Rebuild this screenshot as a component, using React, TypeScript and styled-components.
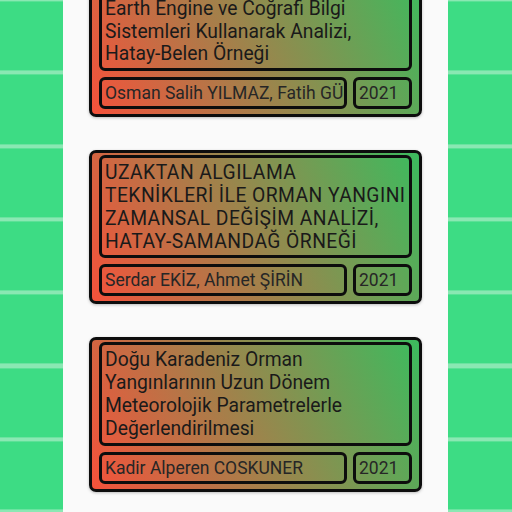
import React from "react";
import styled, { createGlobalStyle } from "styled-components";

const Global = createGlobalStyle`
  html, body { margin: 0; padding: 0; background: #fafafa; }
  body { font-family: Roboto, "Noto Sans", sans-serif; }
  #root { height: 512px; overflow: hidden; }
`;

const Screen = styled.div`
  display: flex;
  width: 512px;
  height: 512px;
  overflow: hidden;
`;

const Strip = styled.div<{ $w: number }>`
  width: ${(p) => p.$w}px;
  flex: 0 0 ${(p) => p.$w}px;
  height: 100%;
  background-color: #3ddc84;
  background-image: repeating-linear-gradient(
    to bottom,
    #8ae8b3 0px,
    #8ae8b3 4px,
    #3ddc84 4px,
    #3ddc84 73.3px
  );
  background-position: 0 -2.6px;
`;

const Middle = styled.div`
  flex: 1;
  height: 100%;
  background: #fafafa;
  overflow: hidden;
`;

const List = styled.div`
  display: flex;
  flex-direction: column;
  gap: 33px;
  padding: 0 26px;
  margin-top: -37px;
`;

const Card = styled.div`
  border: 3px solid #0d0d0d;
  border-radius: 7px;
  padding: 2px 7px 5px;
  background: linear-gradient(65deg, #f5523b 0%, #3cbb5e 100%);
  box-shadow: 0 1px 3px rgba(0, 0, 0, 0.25);
  display: flex;
  flex-direction: column;
  gap: 6px;
`;

const Title = styled.div<{ $caps?: boolean }>`
  border: 3px solid #0d0d0d;
  border-radius: 6px;
  padding: 4px 3px 2px;
  font-size: 19.3px;
  line-height: 22.8px;
  letter-spacing: ${(p) => (p.$caps ? "0.45px" : "0")};
  color: #1a1a1a;
`;

const Row = styled.div`
  display: flex;
  gap: 6px;
`;

const Field = styled.div<{ $grow?: boolean }>`
  border: 3px solid #0d0d0d;
  border-radius: 6px;
  padding: 0 3px;
  height: 26px;
  line-height: 26px;
  font-size: 17.5px;
  color: #262626;
  white-space: nowrap;
  overflow: hidden;
  ${(p) => (p.$grow ? "flex: 1; min-width: 0;" : "flex: 0 0 47px;")}
`;

const items = [
  {
    title:
      "Orman Yangın Alanlarının Google Earth Engine ve Coğrafi Bilgi Sistemleri Kullanarak Analizi, Hatay-Belen Örneği",
    authors: "Osman Salih YILMAZ, Fatih GÜLGEN",
    year: "2021",
    caps: false,
  },
  {
    title:
      "UZAKTAN ALGILAMA TEKNİKLERİ İLE ORMAN YANGINI ZAMANSAL DEĞİŞİM ANALİZİ, HATAY-SAMANDAĞ ÖRNEĞİ",
    authors: "Serdar EKİZ, Ahmet ŞİRİN",
    year: "2021",
    caps: true,
  },
  {
    title:
      "Doğu Karadeniz Orman Yangınlarının Uzun Dönem Meteorolojik Parametrelerle Değerlendirilmesi",
    authors: "Kadir Alperen COSKUNER",
    year: "2021",
    caps: false,
  },
];

export default function App() {
  return (
    <>
      <Global />
      <Screen>
        <Strip $w={63} />
        <Middle>
          <List>
            {items.map((it, i) => (
              <Card key={i}>
                <Title $caps={it.caps}>{it.title}</Title>
                <Row>
                  <Field $grow>{it.authors}</Field>
                  <Field>{it.year}</Field>
                </Row>
              </Card>
            ))}
          </List>
        </Middle>
        <Strip $w={64} />
      </Screen>
    </>
  );
}
